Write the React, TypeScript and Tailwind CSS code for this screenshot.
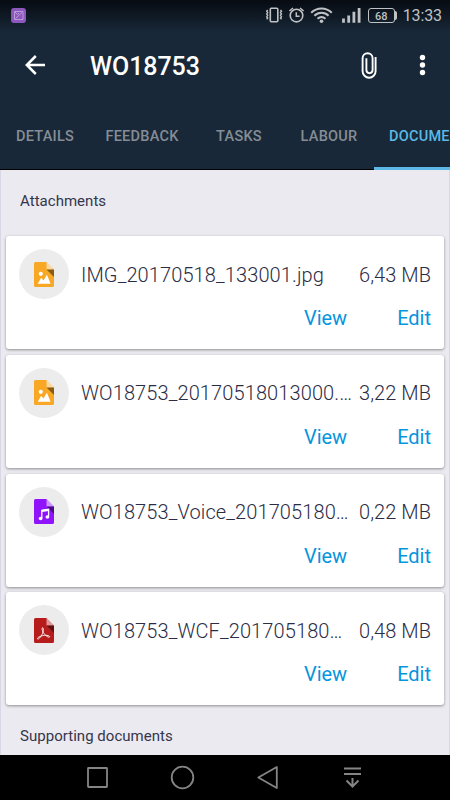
import React from 'react';

type FileKind = 'image' | 'audio' | 'pdf';

interface Attachment {
  name: string;
  size: string;
  kind: FileKind;
}

const attachments: Attachment[] = [
  { name: 'IMG_20170518_133001.jpg', size: '6,43 MB', kind: 'image' },
  { name: 'WO18753_20170518013000.…', size: '3,22 MB', kind: 'image' },
  { name: 'WO18753_Voice_201705180…', size: '0,22 MB', kind: 'audio' },
  { name: 'WO18753_WCF_201705180…', size: '0,48 MB', kind: 'pdf' },
];

const tabs = [
  { label: 'DETAILS', width: 'w-[90px]' },
  { label: 'FEEDBACK', width: 'w-[104px]' },
  { label: 'TASKS', width: 'w-[90px]' },
  { label: 'LABOUR', width: 'w-[90px]' },
];

const fileColors: Record<FileKind, string> = {
  image: '#f9a825',
  audio: '#9013fe',
  pdf: '#b71c1c',
};

const FileIcon: React.FC<{ kind: FileKind }> = ({ kind }) => (
  <svg width="20" height="25" viewBox="0 0 20 25" fill="none">
    <path d="M1.5 0H12.5L20 7.5V23.5a1.5 1.5 0 0 1-1.5 1.5h-17A1.5 1.5 0 0 1 0 23.5v-22A1.5 1.5 0 0 1 1.5 0z" fill={fileColors[kind]} />
    <path d="M12.5 0L20 7.5H12.5z" fill="#fff" fillOpacity=".55" />
    <path d="M12.5 7.5H20V15z" fill="#000" fillOpacity=".45" />
    {kind === 'image' && (
      <>
        <circle cx="6.8" cy="11.8" r="2.1" fill="#fff" />
        <path d="M3.7 21.8L7.2 15.8L9.4 18.4L12.9 12.8L16.6 21.8z" fill="#fff" />
      </>
    )}
    {kind === 'audio' && (
      <>
        <path d="M7.8 19V11.4L14.6 10.3V17.5" stroke="#fff" strokeWidth="1.3" />
        <path d="M7.8 12L14.6 10.9" stroke="#fff" strokeWidth="2" />
        <ellipse cx="6.6" cy="19.5" rx="1.9" ry="1.8" fill="#fff" />
        <ellipse cx="13.4" cy="18" rx="1.9" ry="1.8" fill="#fff" />
      </>
    )}
    {kind === 'pdf' && (
      <path
        d="M8.8 9.8C7.6 9.3 8 12.3 9.3 14.5C10.9 17.2 14.2 19.7 15.4 19.1C16.7 18 13 16.9 9.9 17.4C6.4 17.9 3.1 19.5 3.5 20.8C4.3 22 7.2 18.7 8.5 15.5C9.3 13.6 9.8 10.5 8.8 9.8z"
        stroke="#fff"
        strokeWidth="0.9"
      />
    )}
  </svg>
);

const StatusBar: React.FC = () => (
  <div className="flex h-8 shrink-0 items-center bg-linear-to-b from-[#070b12] to-[#182838] pr-[8px] pl-[11px] text-[#bfc1c4]">
    <svg className="mt-[-2px]" width="15" height="15" viewBox="0 0 15 15" fill="none">
      <rect width="15" height="15" rx="3" fill="#8d58bd" />
      <path d="M3.5 3.5h8.5v8h-8.5zM4.5 10.5L11 4.5M4 4l2.5 2.5L8 5" stroke="#c7abdf" strokeWidth=".8" />
    </svg>
    <svg className="mt-[-2px] ml-auto" width="102" height="18" viewBox="0 0 102 18" fill="none" stroke="currentColor">
      {/* vibrate */}
      <rect x="5.3" y="2.3" width="7.5" height="13.5" rx="1" strokeWidth="1.6" />
      <path d="M2.7 4l-1 1.3 1 1.3-1 1.4 1 1.3-1 1.4 1 1.3-1 1.3M15.5 4l1 1.3-1 1.3 1 1.4-1 1.3 1 1.4-1 1.3 1 1.3" strokeWidth="1.4" />
      {/* alarm */}
      <circle cx="31.5" cy="9.6" r="6.3" strokeWidth="1.6" />
      <path d="M24.4 5l3.6-3M38.6 5l-3.6-3M31.3 6.2v4h3.3" strokeWidth="1.5" />
      {/* wifi */}
      <path d="M46.2 6.7C52 1 61 1 66.8 6.7M49.4 9.8c4-4 10.2-4 14.2 0M52.5 12.8c2.4-2.2 5.6-2.2 8 0" strokeWidth="2" />
      <circle cx="56.5" cy="15.3" r="1.8" fill="currentColor" stroke="none" />
      {/* signal */}
      <path d="M78.5 12.5v4.2M83.7 9.5v7.2M88.9 5.8v10.9M94.1 2v14.7" strokeWidth="2.8" />
    </svg>
    <div className="relative mt-[-1px] ml-[1px] flex h-[15px] w-[27px] items-center justify-center rounded-[3px] border-[1.5px] border-[#bfc1c4] pt-[2px] text-[11px] leading-none font-medium">
      68
      <span className="absolute top-[2px] -right-[3px] h-[9px] w-[2px] rounded-r-sm bg-[#bfc1c4]" />
    </div>
    <span className="ml-[8px] text-[16px] leading-none tracking-[-0.1px]">13:33</span>
  </div>
);

const Header: React.FC = () => (
  <div className="flex h-[68px] shrink-0 items-center pl-[25px] text-white">
    <svg className="mt-[-2px]" width="20" height="20" viewBox="0 0 20 20" fill="none" stroke="currentColor" strokeWidth="2.5">
      <path d="M20 10H2M10.8 1L1.8 10l9 9" />
    </svg>
    <h1 className="mt-[1px] ml-[45px] text-[25px] font-medium tracking-[-0.05px]">WO18753</h1>
    <svg className="mt-[-1px] ml-auto" width="16" height="27" viewBox="0 0 16 27" fill="none" stroke="currentColor" strokeWidth="1.9">
      <path d="M14.6 5v14.2a6.5 6.5 0 0 1-13 0V6.3a5 5 0 0 1 10 0v11.8a3.1 3.1 0 0 1-6.2 0V6.2" />
    </svg>
    <svg className="mt-[-2px] mr-[24px] ml-[42px]" width="7" height="22" viewBox="0 0 7 22" fill="currentColor">
      <circle cx="3.5" cy="3.5" r="2.7" />
      <circle cx="3.5" cy="11" r="2.7" />
      <circle cx="3.5" cy="18.5" r="2.7" />
    </svg>
  </div>
);

const Tabs: React.FC = () => (
  <nav className="flex h-[70px] shrink-0 overflow-hidden text-[14.5px] font-medium tracking-[0.25px] text-[#868d95]">
    {tabs.map((tab) => (
      <div key={tab.label} className={`${tab.width} flex shrink-0 items-center justify-center border-b border-black pt-[4px]`}>
        {tab.label}
      </div>
    ))}
    <div className="flex w-[120px] shrink-0 items-center border-b-3 border-[#5cb8e6] pt-[6px] pl-[15px] text-[#5cb8e6]">DOCUMENTS</div>
  </nav>
);

const AttachmentCard: React.FC<{ item: Attachment }> = ({ item }) => (
  <article className="h-[113px] rounded-[3px] bg-white pt-[13px] pr-[13px] pl-[13px] shadow-[0_1px_3px_rgba(0,0,0,0.4)]">
    <div className="flex h-[50px] items-center">
      <div className="flex size-[50px] shrink-0 items-center justify-center rounded-full bg-[#ececec]">
        <FileIcon kind={item.kind} />
      </div>
      <span className="ml-[12px] pt-[1px] text-[20px] font-light tracking-[0.11px] whitespace-nowrap text-[#2c2c45]">{item.name}</span>
      <span className="ml-auto pt-[1px] text-[20px] font-light tracking-[0.05px] whitespace-nowrap text-[#2c2c45]">{item.size}</span>
    </div>
    <div className="mt-[4px] flex justify-end gap-[50px] text-[20px] text-[#0595dc]">
      <button>View</button>
      <button>Edit</button>
    </div>
  </article>
);

const NavBar: React.FC = () => (
  <div className="flex h-[45px] shrink-0 items-center bg-black">
    <svg width="450" height="45" viewBox="0 0 450 45" fill="none" stroke="#858585" strokeWidth="1.8">
      <rect x="88" y="13" width="19" height="19" rx="0.5" />
      <circle cx="182.5" cy="22.5" r="10.8" />
      <path d="M258.3 22.5L276.8 12V33z" strokeLinejoin="round" />
      <path d="M344 13.5h17M344 19h17M352.5 23v8.5M346.5 25.5l6 6 6-6" strokeWidth="2" />
    </svg>
  </div>
);

const App: React.FC = () => {
  return (
    <div className="flex h-[800px] w-[450px] flex-col overflow-hidden bg-[#182838] font-['Roboto',sans-serif]">
      <StatusBar />
      <Header />
      <Tabs />
      <main className="h-[585px] shrink-0 border-x border-[#d8d7e5] bg-[#ebeaf0] px-[5px]">
        <h2 className="flex h-[66px] items-center pb-[4px] pl-[14px] text-[15px] tracking-[0.03px] text-[#35354b]">Attachments</h2>
        <div className="flex flex-col gap-[5.75px]">
          {attachments.map((item) => (
            <AttachmentCard key={item.name} item={item} />
          ))}
        </div>
        <h2 className="flex h-[61px] items-center pl-[14px] text-[15px] tracking-[0.03px] text-[#35354b]">Supporting documents</h2>
      </main>
      <NavBar />
    </div>
  );
};

export default App;
